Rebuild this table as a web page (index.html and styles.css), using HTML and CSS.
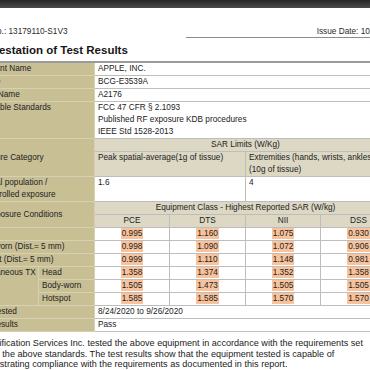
FILE: index.html
```html
<!DOCTYPE html>
<html lang="en">
<head>
<meta charset="utf-8">
<title>Attestation of Test Results</title>
<link rel="stylesheet" href="styles.css">
</head>
<body>
<div class="topbar"></div>
<div class="doc">
  <div class="hdr"><span>Report No.: 13179110-S1V3</span><span>Issue Date: 10/07/2020</span></div>
  <div class="rule"></div>
  <h1 class="title">Attestation of Test Results</h1>
  <table class="res">
    <colgroup>
      <col class="c1"><col class="c2"><col class="c3"><col class="c4"><col class="c5"><col class="c6">
    </colgroup>
    <tr><th colspan="2" class="lab">Applicant Name</th><td colspan="4" class="val">APPLE, INC.</td></tr>
    <tr><th colspan="2" class="lab">FCC ID</th><td colspan="4" class="val">BCG-E3539A</td></tr>
    <tr><th colspan="2" class="lab">Model Name</th><td colspan="4" class="val">A2176</td></tr>
    <tr><th colspan="2" class="lab">Applicable Standards</th><td colspan="4" class="val">FCC 47 CFR § 2.1093<br>Published RF exposure KDB procedures<br>IEEE Std 1528-2013</td></tr>
    <tr><th colspan="2" rowspan="2" class="lab mid">Exposure Category</th><td colspan="4" class="head ctr">SAR Limits (W/Kg)</td></tr>
    <tr><td colspan="2" class="head">Peak spatial-average(1g of tissue)</td><td colspan="2" class="head">Extremities (hands, wrists, ankles, etc.)<br>(10g of tissue)</td></tr>
    <tr><th colspan="2" class="lab">General population /<br>Uncontrolled exposure</th><td colspan="2" class="val">1.6</td><td colspan="2" class="val">4</td></tr>
    <tr><th colspan="2" rowspan="2" class="lab mid">RF Exposure Conditions</th><td colspan="4" class="head ctr">Equipment Class - Highest Reported SAR (W/kg)</td></tr>
    <tr><td class="head ctr dl">PCE</td><td class="head ctr dl">DTS</td><td class="head ctr dl">NII</td><td class="head ctr dl">DSS</td></tr>
    <tr><th colspan="2" class="lab">Head</th><td class="num"><span class="hl">0.995</span></td><td class="num"><span class="hl">1.160</span></td><td class="num"><span class="hl">1.075</span></td><td class="num"><span class="hl">0.930</span></td></tr>
    <tr><th colspan="2" class="lab">Body-worn (Dist.= 5 mm)</th><td class="num"><span class="hl">0.998</span></td><td class="num"><span class="hl">1.090</span></td><td class="num"><span class="hl">1.072</span></td><td class="num"><span class="hl">0.906</span></td></tr>
    <tr><th colspan="2" class="lab">Hotspot (Dist.= 5 mm)</th><td class="num"><span class="hl">0.999</span></td><td class="num"><span class="hl">1.110</span></td><td class="num"><span class="hl">1.148</span></td><td class="num"><span class="hl">0.981</span></td></tr>
    <tr><th rowspan="3" class="lab">Simultaneous TX</th><th class="lab sub">Head</th><td class="num"><span class="hl">1.358</span></td><td class="num"><span class="hl">1.374</span></td><td class="num"><span class="hl">1.352</span></td><td class="num"><span class="hl">1.358</span></td></tr>
    <tr><th class="lab sub">Body-worn</th><td class="num"><span class="hl">1.505</span></td><td class="num"><span class="hl">1.473</span></td><td class="num"><span class="hl">1.505</span></td><td class="num"><span class="hl">1.505</span></td></tr>
    <tr><th class="lab sub">Hotspot</th><td class="num"><span class="hl">1.585</span></td><td class="num"><span class="hl">1.585</span></td><td class="num"><span class="hl">1.570</span></td><td class="num"><span class="hl">1.570</span></td></tr>
    <tr><th colspan="2" class="lab">Date Tested</th><td colspan="4" class="val">8/24/2020 to 9/26/2020</td></tr>
    <tr><th colspan="2" class="lab">Test Results</th><td colspan="4" class="val">Pass</td></tr>
  </table>
  <p class="note">UL Verification Services Inc. tested the above equipment in accordance with the requirements set<br>forth in the above standards. The test results show that the equipment tested is capable of<br>demonstrating compliance with the requirements as documented in this report.</p>
</div>
</body>
</html>
```
FILE: styles.css
```css
html, body {
  margin: 0;
  padding: 0;
  background: #ffffff;
  overflow: hidden;
}

.topbar {
  height: 8px;
  background: linear-gradient(#262626, #4b4b4b);
}

.doc {
  margin-left: -36px;
  width: 438px;
  padding-top: 18px;
  font-family: "Liberation Sans", Arial, sans-serif;
  color: #222;
}

.hdr {
  display: flex;
  justify-content: space-between;
  padding-left: 0;
  font-size: 8.25px;
  line-height: 11px;
  color: #2a2a2a;
  white-space: nowrap;
}

.rule {
  margin-left: 222px;
  height: 1px;
  background: #8c8c8c;
}

.title {
  margin: 5px 0 0;
  padding-left: 19px;
  font-size: 11.5px;
  line-height: 14px;
  font-weight: 700;
  color: #161616;
  white-space: nowrap;
}

.res {
  margin: 4px 0 0 5px;
  border-collapse: collapse;
  table-layout: fixed;
  width: 427px;
  font-size: 8.25px;
  line-height: 12px;
  border-top: 2px solid #9a9a9a;
}

.c1 { width: 69px; }
.c2 { width: 56px; }
.c3 { width: 75px; }
.c4 { width: 76px; }
.c5 { width: 75px; }
.c6 { width: 76px; }

.res th,
.res td {
  padding: 0 3px;
  border: 1px solid #bdbdbd;
  font-weight: 400;
  text-align: left;
  vertical-align: top;
  white-space: nowrap;
  overflow: hidden;
  color: #222;
}

.res .lab {
  background: #c8bf95;
  border-color: #d6d0b4;
}

.res .sub {
  border-left: 1px solid #9d9680;
}

.res .val {
  background: #ffffff;
  border-left: 1px solid #a0a0a0;
}

.res .head {
  background: #dcd8c4;
  border-left: 1px solid #a0a0a0;
}

.res .ctr {
  text-align: center;
}

.res .dl {
  border-left: 1px solid #5a5a5a;
}

.res .mid {
  vertical-align: middle;
}

.res .num {
  background: #ffffff;
  text-align: center;
  border-left: 1px solid #5a5a5a;
}

.hl {
  display: inline-block;
  padding: 0 1px;
  line-height: 11px;
  background: #f8c29c;
}

.note {
  margin: 6px 0 0;
  padding-left: 8px;
  font-size: 9.1px;
  line-height: 10.7px;
  color: #222;
  white-space: nowrap;
}
```
